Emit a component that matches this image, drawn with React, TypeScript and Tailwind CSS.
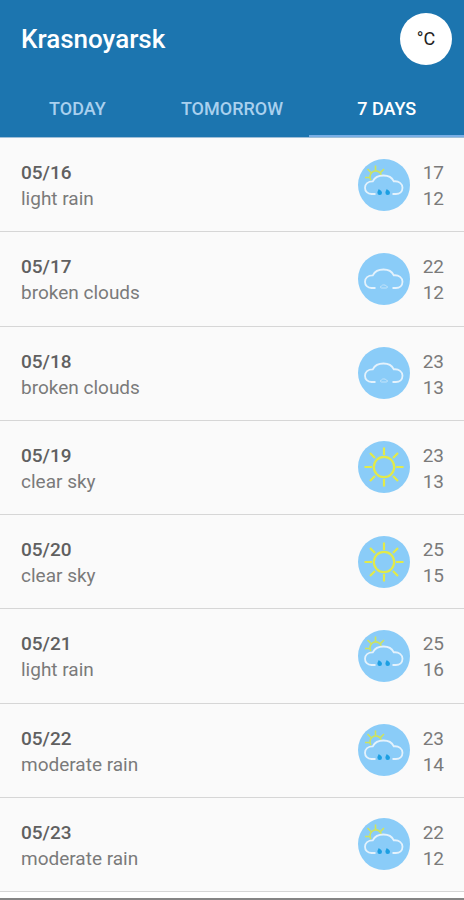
import React from "react";

type Kind = "rain" | "clouds" | "clear";

interface Day {
  date: string;
  text: string;
  kind: Kind;
  high: number;
  low: number;
}

const days: Day[] = [
  { date: "05/16", text: "light rain", kind: "rain", high: 17, low: 12 },
  { date: "05/17", text: "broken clouds", kind: "clouds", high: 22, low: 12 },
  { date: "05/18", text: "broken clouds", kind: "clouds", high: 23, low: 13 },
  { date: "05/19", text: "clear sky", kind: "clear", high: 23, low: 13 },
  { date: "05/20", text: "clear sky", kind: "clear", high: 25, low: 15 },
  { date: "05/21", text: "light rain", kind: "rain", high: 25, low: 16 },
  { date: "05/22", text: "moderate rain", kind: "rain", high: 23, low: 14 },
  { date: "05/23", text: "moderate rain", kind: "rain", high: 22, low: 12 },
];

const tabs = ["TODAY", "TOMORROW", "7 DAYS"];

function WeatherIcon({ kind }: { kind: Kind }) {
  return (
    <svg viewBox="0 0 52 52" className="size-13 shrink-0" fill="none" aria-hidden="true">
      <circle cx="26" cy="26" r="26" fill="#8accf8" />
      {kind === "clear" && (
        <g stroke="#e2ea4a" strokeWidth="2.2">
          <circle cx="26" cy="26" r="10.2" />
          <path d="M26 6.500v7.500M26 38v7.500M6.500 26h7.500M38 26h7.500M12 12l5 5M35 35l5 5M12 40l5-5M35 17l5-5" />
        </g>
      )}
      {kind === "rain" && (
        <g stroke="#cfe35c" strokeWidth="1.6">
          <path d="M13 21a5.800 5.800 0 1 1 10.500-4" />
          <path d="M17.500 6.500v4.500M9.500 10l3.500 3.500M26 10l-3.500 3.500M7 18.500h4.500" />
        </g>
      )}
      {kind !== "clear" && (
        <path
          d="M17.500 35H13.500C9.500 35 7 32.300 7 28.800C7 25 10 22.300 14.800 22.300C16.800 18.300 20.500 16.500 25.500 16.500C30.500 16.500 34 18.500 35.800 22.300C41 21.800 44.500 24.800 44.500 28.800C44.500 32.500 41.800 35 37.800 35H34.500"
          stroke="#e4f2fc"
          strokeWidth="1.8"
          strokeLinejoin="round"
        />
      )}
      {kind === "rain" && (
        <path
          d="M20.700 30C22.500 31.300 24 32.200 24 33.800A2.300 2.300 0 0 1 19.400 33.800C19.400 32.200 20.400 31.500 20.700 30ZM28.700 30C30.500 31.300 32 32.200 32 33.800A2.300 2.300 0 0 1 27.400 33.800C27.400 32.200 28.400 31.500 28.700 30Z"
          fill="#1c9fe2"
        />
      )}
      {kind === "clouds" && (
        <path
          d="M23.500 35c-1.500 0-1.500-2 0-2c.6-1.500 4-1.500 4.700 0c1.800 0 1.800 2 0 2z"
          stroke="#c3e4fa"
          strokeWidth="1"
        />
      )}
    </svg>
  );
}

export default function App() {
  return (
    <div className="flex min-h-screen flex-col bg-[#fafafa] font-['Roboto','Liberation_Sans',sans-serif]">
      <header className="border-b border-[#9fbfd8] bg-[#1c75af] text-white">
        <div className="flex h-[77px] items-center justify-between pr-3 pl-[21px]">
          <h1 className="text-[26px] leading-8 font-medium">Krasnoyarsk</h1>
          <button className="size-[52px] rounded-full bg-white text-[18px] text-[#222]">°C</button>
        </div>
        <nav className="grid h-15 grid-cols-3">
          {tabs.map((tab) => (
            <button
              key={tab}
              className={
                tab === "7 DAYS"
                  ? "border-b-2 border-[#78aee5] pt-1 text-[18px] font-medium text-white"
                  : "border-b-2 border-transparent pt-1 text-[18px] font-medium text-[#a9d0ee]"
              }
            >
              {tab}
            </button>
          ))}
        </nav>
      </header>
      <ul className="grid flex-1 auto-rows-fr">
        {days.map((day) => (
          <li
            key={day.date}
            className="flex items-center border-b border-[#d6d6d6] pr-5 pl-[21px] text-[19px] leading-[26px] text-[#7a7a7a]"
          >
            <div className="flex-1 pt-[3px]">
              <p className="font-medium text-[#606060]">{day.date}</p>
              <p>{day.text}</p>
            </div>
            <WeatherIcon kind={day.kind} />
            <div className="ml-[13px] pt-[3px] text-right">
              <p>{day.high}</p>
              <p>{day.low}</p>
            </div>
          </li>
        ))}
      </ul>
      <footer className="h-2 border-b-2 border-[#858585] bg-white" />
    </div>
  );
}
